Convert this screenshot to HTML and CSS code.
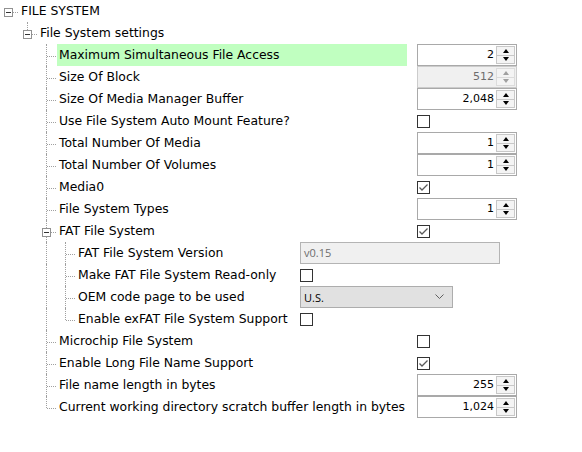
FILE: index.html
```html
<!DOCTYPE html>
<html>
<head>
<meta charset="utf-8">
<link rel="stylesheet" href="styles.css">
</head>
<body>
<div class="tree">
  <div class="row">
    <span class="g h"><span class="box"></span></span>
    <span class="lbl">FILE SYSTEM</span>
  </div>
  <div class="row">
    <span class="g"></span><span class="g l"><span class="box"></span></span>
    <span class="lbl">File System settings</span>
  </div>
  <div class="row">
    <span class="g"></span><span class="g"></span><span class="g t"></span>
    <span class="lbl w2 hl">Maximum Simultaneous File Access</span>
    <span class="spin"><span class="num">2</span><span class="btns"><span class="up"></span><span class="dn"></span></span></span>
  </div>
  <div class="row">
    <span class="g"></span><span class="g"></span><span class="g t"></span>
    <span class="lbl w2">Size Of Block</span>
    <span class="spin dis"><span class="num">512</span><span class="btns"><span class="up"></span><span class="dn"></span></span></span>
  </div>
  <div class="row">
    <span class="g"></span><span class="g"></span><span class="g t"></span>
    <span class="lbl w2">Size Of Media Manager Buffer</span>
    <span class="spin"><span class="num">2,048</span><span class="btns"><span class="up"></span><span class="dn"></span></span></span>
  </div>
  <div class="row">
    <span class="g"></span><span class="g"></span><span class="g t"></span>
    <span class="lbl w2">Use File System Auto Mount Feature?</span>
    <span class="cb"></span>
  </div>
  <div class="row">
    <span class="g"></span><span class="g"></span><span class="g t"></span>
    <span class="lbl w2">Total Number Of Media</span>
    <span class="spin"><span class="num">1</span><span class="btns"><span class="up"></span><span class="dn"></span></span></span>
  </div>
  <div class="row">
    <span class="g"></span><span class="g"></span><span class="g t"></span>
    <span class="lbl w2">Total Number Of Volumes</span>
    <span class="spin"><span class="num">1</span><span class="btns"><span class="up"></span><span class="dn"></span></span></span>
  </div>
  <div class="row">
    <span class="g"></span><span class="g"></span><span class="g t"></span>
    <span class="lbl w2">Media0</span>
    <span class="cb"><svg width="11" height="11" viewBox="0 0 11 11"><polyline points="1.5,5.5 4,8 9.5,2.5" fill="none" stroke="#5a5a5a" stroke-width="1.3"/></svg></span>
  </div>
  <div class="row">
    <span class="g"></span><span class="g"></span><span class="g t"></span>
    <span class="lbl w2">File System Types</span>
    <span class="spin"><span class="num">1</span><span class="btns"><span class="up"></span><span class="dn"></span></span></span>
  </div>
  <div class="row">
    <span class="g"></span><span class="g"></span><span class="g t"><span class="box"></span></span>
    <span class="lbl w2">FAT File System</span>
    <span class="cb"><svg width="11" height="11" viewBox="0 0 11 11"><polyline points="1.5,5.5 4,8 9.5,2.5" fill="none" stroke="#5a5a5a" stroke-width="1.3"/></svg></span>
  </div>
  <div class="row">
    <span class="g"></span><span class="g"></span><span class="g v"></span><span class="g t"></span>
    <span class="lbl w3">FAT File System Version</span>
    <span class="txt">v0.15</span>
  </div>
  <div class="row">
    <span class="g"></span><span class="g"></span><span class="g v"></span><span class="g t"></span>
    <span class="lbl w3">Make FAT File System Read-only</span>
    <span class="cb"></span>
  </div>
  <div class="row">
    <span class="g"></span><span class="g"></span><span class="g v"></span><span class="g t"></span>
    <span class="lbl w3">OEM code page to be used</span>
    <span class="combo"><span>U.S.</span><svg width="9" height="6" viewBox="0 0 9 6"><polyline points="0.5,0.5 4.5,4.5 8.5,0.5" fill="none" stroke="#606060" stroke-width="1"/></svg></span>
  </div>
  <div class="row">
    <span class="g"></span><span class="g"></span><span class="g v"></span><span class="g l"></span>
    <span class="lbl w3">Enable exFAT File System Support</span>
    <span class="cb"></span>
  </div>
  <div class="row">
    <span class="g"></span><span class="g"></span><span class="g t"></span>
    <span class="lbl w2">Microchip File System</span>
    <span class="cb"></span>
  </div>
  <div class="row">
    <span class="g"></span><span class="g"></span><span class="g t"></span>
    <span class="lbl w2">Enable Long File Name Support</span>
    <span class="cb"><svg width="11" height="11" viewBox="0 0 11 11"><polyline points="1.5,5.5 4,8 9.5,2.5" fill="none" stroke="#5a5a5a" stroke-width="1.3"/></svg></span>
  </div>
  <div class="row">
    <span class="g"></span><span class="g"></span><span class="g t"></span>
    <span class="lbl w2">File name length in bytes</span>
    <span class="spin"><span class="num">255</span><span class="btns"><span class="up"></span><span class="dn"></span></span></span>
  </div>
  <div class="row">
    <span class="g"></span><span class="g"></span><span class="g l"></span>
    <span class="lbl w2">Current working directory scratch buffer length in bytes</span>
    <span class="spin"><span class="num">1,024</span><span class="btns"><span class="up"></span><span class="dn"></span></span></span>
  </div>
</div>
</body>
</html>
```
FILE: styles.css
```css
html, body {
  margin: 0;
  padding: 0;
  background: #ffffff;
}
body {
  font-family: "DejaVu Sans", Verdana, sans-serif;
  font-size: 12.4px;
  color: #000;
}
.tree {
  display: flex;
  flex-direction: column;
}
.row {
  display: flex;
  align-items: center;
  height: 22px;
}
.g {
  flex: none;
  width: 19px;
  height: 22px;
  position: relative;
}
.g.v::before,
.g.t::before,
.g.l::before {
  content: "";
  position: absolute;
  left: 8px;
  top: 0;
  bottom: 0;
  border-left: 1px dotted #a0a0a0;
}
.g.l::before {
  bottom: auto;
  height: 12px;
}
.g.t::after,
.g.l::after,
.g.h::after {
  content: "";
  position: absolute;
  left: 9px;
  right: 1px;
  top: 12px;
  border-top: 1px dotted #a0a0a0;
}
.box {
  position: absolute;
  left: 4px;
  top: 8px;
  width: 7px;
  height: 7px;
  border: 1px solid #919191;
  background: #fff;
  z-index: 1;
}
.box::after {
  content: "";
  position: absolute;
  left: 1px;
  top: 3px;
  width: 5px;
  height: 1px;
  background: #333;
}
.lbl {
  flex: none;
  box-sizing: border-box;
  height: 22px;
  line-height: 22px;
  padding-left: 2px;
  white-space: nowrap;
}
.w2 {
  width: 350px;
  margin-right: 10px;
}
.w3 {
  width: 214px;
  margin-right: 10px;
}
.hl {
  background: #c0ffc0;
}
.spin {
  flex: none;
  display: flex;
  box-sizing: border-box;
  width: 100px;
  height: 22px;
  border: 1px solid #a9a9a9;
  background: #fff;
  font-size: 11px;
}
.num {
  flex: 1;
  text-align: right;
  line-height: 20px;
  padding-right: 2px;
}
.btns {
  flex: none;
  width: 19px;
  display: flex;
  flex-direction: column;
  padding: 1px 1px 1px 0;
}
.up, .dn {
  flex: 1;
  display: flex;
  align-items: center;
  justify-content: center;
  border: 1px solid #c8c8c8;
  background: #f4f4f4;
}
.dn {
  border-top: none;
}
.up::after {
  content: "";
  border-left: 3px solid transparent;
  border-right: 3px solid transparent;
  border-bottom: 4px solid #000;
}
.dn::after {
  content: "";
  border-left: 3px solid transparent;
  border-right: 3px solid transparent;
  border-top: 4px solid #000;
}
.spin.dis {
  background: #f0f0f0;
  color: #6d6d6d;
  border-color: #cccccc;
}
.spin.dis .up::after { border-bottom-color: #a0a0a0; }
.spin.dis .dn::after { border-top-color: #a0a0a0; }
.spin.dis .up, .spin.dis .dn { border-color: #dcdcdc; }
.cb {
  flex: none;
  box-sizing: border-box;
  width: 13px;
  height: 13px;
  border: 1px solid #333;
  background: #fff;
  display: flex;
  align-items: center;
  justify-content: center;
}
.txt {
  flex: none;
  box-sizing: border-box;
  width: 200px;
  height: 22px;
  line-height: 20px;
  padding-left: 3px;
  border: 1px solid #b4b4b4;
  background: #f0f0f0;
  color: #6d6d6d;
  font-family: "Open Sans", "Noto Sans", sans-serif;
  font-size: 11px;
}
.combo {
  flex: none;
  box-sizing: border-box;
  width: 153px;
  height: 22px;
  display: flex;
  align-items: center;
  justify-content: space-between;
  padding: 0 8px 0 3px;
  border: 1px solid #adadad;
  background: #e1e1e1;
  font-family: "Open Sans", "Noto Sans", sans-serif;
  font-size: 11px;
}
```
